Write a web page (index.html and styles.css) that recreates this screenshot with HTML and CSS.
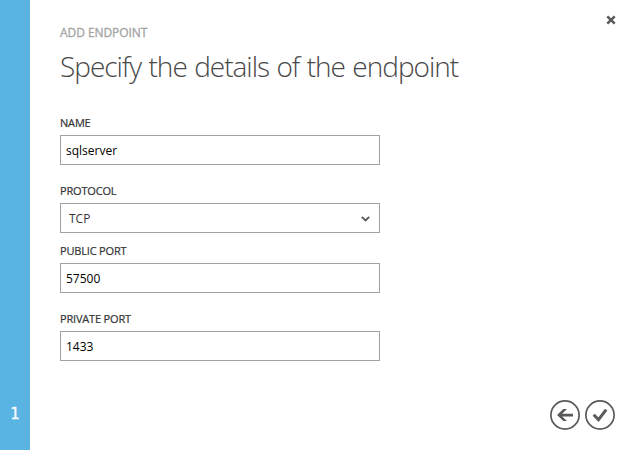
FILE: index.html
```html
<!DOCTYPE html>
<html lang="en">
<head>
<meta charset="utf-8">
<title>Add Endpoint</title>
<link rel="stylesheet" href="styles.css">
</head>
<body>
<div class="dialog">
  <aside class="steps"><span class="step">1</span></aside>
  <main class="content">
    <header class="header">
      <div class="heading">
        <p class="eyebrow">ADD ENDPOINT</p>
        <h1 class="title">Specify the details of the endpoint</h1>
      </div>
      <button class="close" aria-label="Close">
        <svg width="10" height="10" viewBox="0 0 10 10"><path d="M1.3 1.3 8.7 8.7M8.7 1.3 1.3 8.7"/></svg>
      </button>
    </header>
    <form class="form">
      <div class="field">
        <label class="label" for="name">NAME</label>
        <input class="box" id="name" value="sqlserver">
      </div>
      <div class="field compact">
        <span class="label">PROTOCOL</span>
        <div class="box select"><span>TCP</span>
          <svg width="9" height="6" viewBox="0 0 9 6"><path d="M.8.8 4.5 4.5 8.2.8"/></svg>
        </div>
      </div>
      <div class="field">
        <label class="label" for="public">PUBLIC PORT</label>
        <input class="box" id="public" value="57500">
      </div>
      <div class="field">
        <label class="label" for="private">PRIVATE PORT</label>
        <input class="box" id="private" value="1433">
      </div>
    </form>
    <footer class="actions">
      <button class="round" aria-label="Back">
        <svg width="30" height="30" viewBox="0 0 30 30"><circle cx="15" cy="15" r="14.1"/><path class="solid" d="M7 15 13.3 9H17L12.2 13.7H23V16.4H12.2L17 21H13.3Z"/></svg>
      </button>
      <button class="round" aria-label="Complete">
        <svg width="30" height="30" viewBox="0 0 30 30"><circle cx="15" cy="15" r="14.1"/><path class="check" d="M8.7 14.7 13.5 19.6 21.2 9.6"/></svg>
      </button>
    </footer>
  </main>
</div>
</body>
</html>
```
FILE: styles.css
```css
* { box-sizing: border-box; }
body { margin: 0; font-family: "Open Sans", "Noto Sans", sans-serif; background: #fff; }
button { padding: 0; border: 0; background: none; display: block; }
svg { display: block; fill: none; stroke: #5a5a5a; }
.dialog { display: flex; width: 630px; height: 450px; }
.steps { width: 30px; background: #59b4e3; display: flex; flex-direction: column; justify-content: flex-end; align-items: center; padding-bottom: 26px; }
.step { font: 15px/20px "DejaVu Sans", sans-serif; color: #fff; -webkit-text-stroke: .4px #fff; opacity: .95; }
.content { flex: 1; display: flex; flex-direction: column; padding: 15px 15px 20px 30px; }
.header { display: flex; justify-content: space-between; height: 100px; }
.heading { padding-top: 8px; }
.eyebrow { margin: 0; font-size: 12px; line-height: 20px; color: #a3a3a3; letter-spacing: -.06px; -webkit-text-stroke: .3px #a3a3a3; }
.title { margin: 4px 0 0; font-size: 28px; line-height: 38px; font-weight: 300; letter-spacing: -1.02px; word-spacing: 1.2px; color: #484848; white-space: nowrap; }
.close { width: 10px; height: 10px; margin-right: -1px; }
.close path { stroke-width: 2.5; }
.form { width: 320px; }
.field { height: 68px; }
.field.compact { height: 60px; }
.label { display: block; height: 20px; font-size: 11px; line-height: 15px; letter-spacing: -.18px; color: #333; white-space: nowrap; -webkit-text-stroke: .2px #333; }
.box { display: block; width: 320px; height: 30px; border: 1px solid #a0a0a0; border-radius: 0; padding: 0 5px; background: #fff; font: 12px/28px "Open Sans", sans-serif; color: #000; outline: 0; }
.select { display: flex; align-items: center; justify-content: space-between; padding: 0 9px 0 8px; color: #333; }
.select span { padding-top: 1px; }
.select svg { margin-top: 2px; }
.select path { stroke-width: 1.8; }
.actions { display: flex; justify-content: flex-end; gap: 5px; margin-top: auto; }
.round circle { stroke-width: 1.7; }
.round .solid { fill: #5a5a5a; stroke: none; }
.round .check { stroke-width: 3; }
```
